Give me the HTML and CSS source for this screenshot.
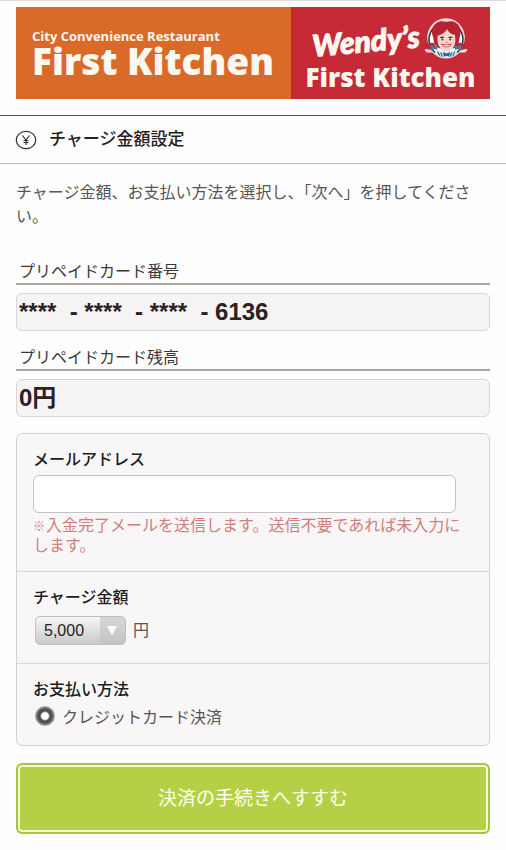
FILE: index.html
```html
<!DOCTYPE html>
<html lang="ja">
<head>
<meta charset="utf-8">
<meta name="viewport" content="width=device-width, initial-scale=1">
<title>チャージ金額設定</title>
<link rel="stylesheet" href="styles.css">
</head>
<body>
<header class="banner">
  <div class="brand brand-city">
    <span class="tagline">City Convenience Restaurant</span>
    <span class="name">First Kitchen</span>
  </div>
  <div class="brand brand-wendys">
    <div class="wendys">
      <span class="script">Wendy’s</span>
      <svg class="cameo" viewBox="0 0 88 84" aria-hidden="true">
        <path d="M3 61 Q8 58 11 52 A36 37 0 1 1 77 52 Q80 58 85 61 L81 66 L70 66 A36 37 0 0 1 18 66 L7 66 Z" fill="#f7dfe0"/>
        <circle cx="44" cy="41" r="34" fill="#263746"/>
        <circle cx="44" cy="41" r="31" fill="#fff"/>
        <path d="M22 67 Q27 58 44 60 Q61 58 66 67 Q57 76 44 76 Q31 76 22 67Z" fill="#e8f0f6"/>
        <path d="M20 38 C10 16 29 1 44 8 C63 0 79 18 69 40 C69 48 66 55 58 58 L31 58 C23 54 20 46 20 38Z" fill="#b92230"/>
        <path d="M22 48 Q10 44 4 58 Q14 64 24 56Z M66 48 Q78 44 84 58 Q74 64 64 56Z" fill="#c8202f"/>
        <path d="M28 34 Q43 29 46 21 Q50 31 61 32 Q66 59 45 64 Q25 59 28 34Z" fill="#f5d5c6"/>
        <path d="M33 38 q4 -3 7 0 M49 38 q4 -3 7 0" fill="none" stroke="#4a2328" stroke-width="2"/>
        <circle cx="37" cy="41" r="1.8" fill="#2c3c48"/><circle cx="52" cy="41" r="1.8" fill="#2c3c48"/>
        <path d="M35 50 Q45 53 54 50 Q46 61 35 50Z" fill="#fff" stroke="#b92230" stroke-width="1.5"/>
        <path d="M43 46 q2 2 4 0" fill="none" stroke="#a65b4d" stroke-width="1.5"/>
        <path d="M14 50 l8 5 6 -4 -1 10 -6 -2 -6 4Z M74 50 l-8 5 -6 -4 1 10 6 -2 6 4Z" fill="#377fa9"/>
        <path d="M28 64 l4 8 M34 66 l3 8 M55 66 l-3 8 M61 64 l-4 8" stroke="#377fa9" stroke-width="3"/>
        <path d="M38 65 l7 3 7 -3 -2 9 -5 -2 -5 2Z" fill="#28678e"/>
      </svg>
    </div>
    <span class="name name-small">First Kitchen</span>
  </div>
</header>

<div class="title-bar">
  <svg class="yen" viewBox="0 0 22 22" aria-hidden="true">
    <ellipse cx="11" cy="11" rx="9.7" ry="8.7"/>
    <path d="M7.5 6.5 L11 11 L14.5 6.5 M11 11 V16 M8.5 11.5 H13.5 M8.5 13.5 H13.5"/>
  </svg>
  <h1>チャージ金額設定</h1>
</div>

<main>
  <p class="intro">チャージ金額、お支払い方法を選択し、「次へ」を押してください。</p>

  <section class="info">
    <h2>プリペイドカード番号</h2>
    <p class="value">****  - ****  - ****  - 6136</p>
  </section>
  <section class="info">
    <h2>プリペイドカード残高</h2>
    <p class="value">0円</p>
  </section>

  <form>
    <div class="panel">
      <div class="row row-mail">
        <label class="caption" for="mail">メールアドレス</label>
        <input class="mail" id="mail" type="email">
        <p class="note"><small>※</small>入金完了メールを送信します。送信不要であれば未入力にします。</p>
      </div>
      <div class="row row-amount">
        <label class="caption" for="amount">チャージ金額</label>
        <div class="amount-line">
          <span class="select-box">
            <select id="amount"><option>5,000</option></select>
          </span>
          <span>円</span>
        </div>
      </div>
      <fieldset class="row row-pay">
        <legend class="caption">お支払い方法</legend>
        <label class="choice"><input type="radio" name="pay" checked><span>クレジットカード決済</span></label>
      </fieldset>
    </div>
    <button class="submit" type="submit">決済の手続きへすすむ</button>
  </form>
</main>
</body>
</html>
```
FILE: styles.css
```css
* { box-sizing: border-box; }

body {
  margin: 0;
  border-top: 1px solid #dddadd;
  background: #fffefe;
  color: #585454;
  font-family: "Liberation Sans", "Noto Sans CJK JP", sans-serif;
  font-size: 16px;
  line-height: 24px;
}

h1, h2, p { margin: 0; }

.banner {
  display: grid;
  grid-template-columns: 275fr 199fr;
  margin: 6px 16px 16px;
  height: 92px;
  color: #fff8f0;
  font-family: "Open Sans", Lato, sans-serif;
  font-weight: 800;
  white-space: nowrap;
}

.brand {
  display: flex;
  flex-direction: column;
  min-width: 0;
}

.brand-city {
  padding: 21px 0 0 16px;
  background: #da6a2a;
}

.brand-wendys {
  align-items: center;
  padding-top: 11px;
  background: #c72a37;
}

.tagline { font-size: 13px; font-weight: 700; line-height: 17px; }
.name { font-size: 37px; line-height: 32px; }
.name-small { font-size: 26px; line-height: 31px; }

.wendys {
  display: flex;
  align-items: center;
  gap: 3px;
  height: 44px;
}

.script {
  font-family: Lato, sans-serif;
  font-size: 30px;
  font-style: italic;
  font-weight: 900;
  line-height: 44px;
  transform: rotate(-5deg);
  -webkit-text-stroke: 1px #fff8f0;
}

.cameo { flex: none; width: 46px; height: 44px; }

.title-bar {
  display: flex;
  align-items: center;
  gap: 12px;
  height: 49px;
  padding: 0 15px;
  border-top: 1px solid #555153;
  border-bottom: 1px solid #c3b5b8;
}

.title-bar h1 {
  color: #242021;
  font-size: 17px;
  font-weight: 500;
}

.yen {
  width: 22px;
  height: 22px;
  fill: none;
  stroke: #343032;
  stroke-width: 1.2;
}

main { padding: 17px 16px; }

.intro { margin-bottom: 32px; }

.info { margin-bottom: 16px; }

.info h2 {
  margin-bottom: 8px;
  padding-left: 3px;
  border-bottom: 2px solid #aaa69c;
  color: #3c3839;
  font-size: 16px;
  font-weight: 400;
  line-height: 22px;
}

.value {
  height: 38px;
  padding-left: 2px;
  border: 1px solid #d9d6d9;
  border-radius: 6px;
  background: #f5f3f4;
  color: #2b2022;
  font-size: 24px;
  font-weight: 700;
  line-height: 36px;
  white-space: pre;
}

.panel {
  margin-bottom: 17px;
  border: 1px solid #d5d2d5;
  border-radius: 6px;
  background: #f8f6f7;
}

.row {
  margin: 0;
  padding: 14px 16px;
  border: 0;
}

.row + .row { border-top: 1px solid #d9d7d9; }

.caption {
  display: block;
  padding: 0;
  color: #211c1d;
  font-weight: 500;
}

.mail {
  display: block;
  width: calc(100% - 17px);
  height: 38px;
  margin: 3px 0;
  padding: 0 8px;
  border: 1px solid #c4c2c4;
  border-radius: 6px;
  background: #fff;
  font: inherit;
}

.note { color: #cf7f7d; line-height: 20px; }
.note small {
  margin-right: 1px;
  font-size: 12px;
  font-weight: 700;
  line-height: 1;
}

.amount-line {
  display: flex;
  align-items: center;
  gap: 7px;
  margin: 6px 2px 4px;
}

.select-box { position: relative; display: flex; }

.select-box::after {
  position: absolute;
  top: 10px;
  right: 9px;
  border: 5px solid transparent;
  border-top: 9px solid #fff;
  border-bottom: 0;
  content: "";
  pointer-events: none;
}

select {
  width: 91px;
  height: 29px;
  padding: 0 8px;
  border: 1px solid #c0bec0;
  border-radius: 5px;
  appearance: none;
  background:
    linear-gradient(#d6d6d6, #c4c4c4) right / 25px 100% no-repeat,
    linear-gradient(#f6f6f6, #c9c9c9);
  color: #262324;
  font: inherit;
}

.row-mail { padding-bottom: 15px; }

.row-pay { padding-bottom: 15px; }
.row-pay legend { float: left; width: 100%; }

.choice {
  display: flex;
  clear: both;
  gap: 7px;
  padding: 4px 0 0 2px;
}

.choice input {
  width: 20px;
  height: 20px;
  margin: 0;
  border: 1px solid #aaa8a9;
  border-radius: 50%;
  appearance: none;
  background: radial-gradient(circle, #fff 0 3px, #bbb 4px, #4b494a 5px, #555 7px, #888 9px);
}

.submit {
  display: block;
  width: 100%;
  height: 71px;
  border: 2px solid #a9c43e;
  border-radius: 6px;
  background: #b5d047;
  box-shadow: inset 0 0 0 2px #f3fbcf;
  color: #fdffe9;
  font: inherit;
  font-size: 19px;
}
```
